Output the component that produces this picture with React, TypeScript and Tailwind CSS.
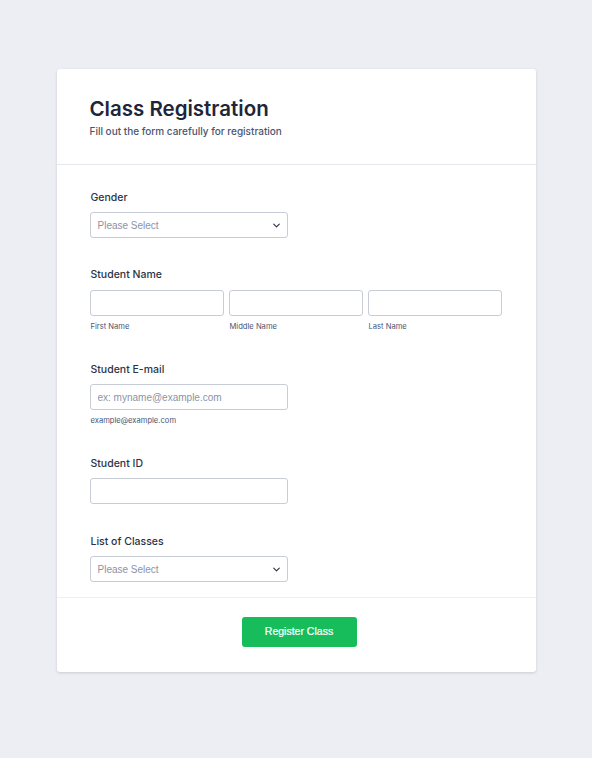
import React from 'react';

const inputCls =
  'h-[26px] rounded-[3px] border border-[#c8ccd6] bg-white px-[7px] text-[10px] text-[#2c3345] placeholder:text-[#8a93a8] outline-none';

const arial = { fontFamily: '"Liberation Sans", Arial, sans-serif' };

const Label: React.FC<{ children: React.ReactNode }> = ({ children }) => (
  <div className="pl-[1px] pt-[1px] text-[10.5px] leading-[16px] font-medium text-[#2c3345]">{children}</div>
);

const Hint: React.FC<{ children: React.ReactNode }> = ({ children }) => (
  <div className="pl-[1px] text-[7.6px] leading-[12px] text-[#4b5572]">{children}</div>
);

const Select: React.FC = () => (
  <div className="relative w-[198px]">
    <div className={inputCls + ' flex w-full items-center'} style={arial}>
      <span className="text-[#8a93a8]">Please Select</span>
    </div>
    <svg
      viewBox="0 0 10 6"
      className="absolute right-[8px] top-[11px] h-[5px] w-[7px] text-[#2c3345]"
      fill="none"
      stroke="currentColor"
      strokeWidth="1.6"
      strokeLinecap="round"
      strokeLinejoin="round"
    >
      <path d="M1 1l4 4 4-4" />
    </svg>
  </div>
);

export default function App() {
  return (
    <div className="min-h-[758px] bg-[#eceef3] pt-[69px] pb-[85px]" style={{ fontFamily: 'Inter, "Noto Sans", sans-serif' }}>
      <div className="mx-auto w-[479px] rounded-[3px] bg-white shadow-[0_1px_3px_rgba(40,50,80,0.18)]">
        <div className="border-b border-[#e6e8ee] px-[33px] pt-[27px] pb-[25px]">
          <h1 className="text-[20.5px] leading-[26px] font-semibold text-[#1f2639]">Class Registration</h1>
          <p className="mt-[1px] text-[10px] leading-[16px] font-medium text-[#4b5572]">
            Fill out the form carefully for registration
          </p>
        </div>

        <div className="flex flex-col gap-[28px] border-b border-[#eef0f4] px-[33px] pt-[24px] pb-[15px]">
          <div className="flex flex-col gap-[6px]">
            <Label>Gender</Label>
            <Select />
          </div>

          <div className="flex flex-col gap-[7px]">
            <Label>Student Name</Label>
            <div className="grid grid-cols-3 gap-[5px] pr-[1px]">
              {['First Name', 'Middle Name', 'Last Name'].map((s) => (
                <div key={s} className="flex flex-col gap-[5px]">
                  <input className={inputCls + ' w-full'} />
                  <Hint>{s}</Hint>
                </div>
              ))}
            </div>
          </div>

          <div className="flex flex-col gap-[6px]">
            <Label>Student E-mail</Label>
            <div className="flex w-[198px] flex-col gap-[5px]">
              <input className={inputCls + ' w-full'} placeholder="ex: myname@example.com" style={arial} />
              <Hint>example@example.com</Hint>
            </div>
          </div>

          <div className="flex flex-col gap-[5px]">
            <Label>Student ID</Label>
            <div className="w-[198px]">
              <input className={inputCls + ' w-full'} />
            </div>
          </div>

          <div className="mt-[1px] flex flex-col gap-[6px]">
            <Label>List of Classes</Label>
            <Select />
          </div>
        </div>

        <div className="flex justify-center pt-[19px] pb-[25px]">
          <button
            className="ml-[6px] h-[30px] w-[115px] rounded-[3px] bg-[#18bd5b] text-[10.5px] text-white [-webkit-text-stroke:0.2px_white]"
            style={arial}
          >
            Register Class
          </button>
        </div>
      </div>
    </div>
  );
}
